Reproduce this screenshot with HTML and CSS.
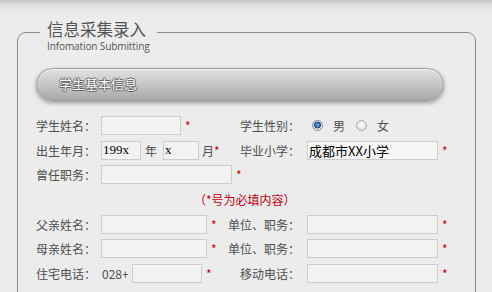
FILE: index.html
```html
<!DOCTYPE html>
<html>
  <head>
    <meta charset="utf-8" />
    <title>信息采集录入</title>
    <link rel="stylesheet" href="styles.css">
  </head>

  <body>
    <div class="page">
      <div class="box">
        <div class="legend">
          <div class="legend-cn">信息采集录入</div>
          <div class="legend-en">Infomation Submitting</div>
        </div>

        <div class="bar">学生基本信息</div>

        <form class="form">
          <div class="row">
            <div class="left">
              <label class="lbl">学生姓名：</label>
              <input type="text" class="in w80" />
              <span class="star">*</span>
            </div>
            <label class="rlbl">学生性别：</label>
            <span class="radio on"></span><span class="opt">男</span>
            <span class="radio"></span><span class="opt">女</span>
          </div>

          <div class="row">
            <div class="left">
              <label class="lbl">出生年月：</label>
              <input type="text" class="in w40 serif" value="199x" />
              <span class="unit">年</span>
              <input type="text" class="in w36 serif" value="x" />
              <span class="unit2">月</span><span class="star s0">*</span>
            </div>
            <label class="rlbl">毕业小学：</label>
            <input type="text" class="in w131 dark" value="成都市XX小学" />
            <span class="star">*</span>
          </div>

          <div class="row">
            <div class="left">
              <label class="lbl">曾任职务：</label>
              <input type="text" class="in w131" />
              <span class="star">*</span>
            </div>
          </div>

          <div class="row note">（*号为必填内容）</div>

          <div class="row">
            <div class="left">
              <label class="lbl">父亲姓名：</label>
              <input type="text" class="in w106" />
              <span class="star">*</span>
            </div>
            <label class="rlbl">单位、职务：</label>
            <input type="text" class="in w131" />
            <span class="star">*</span>
          </div>

          <div class="row">
            <div class="left">
              <label class="lbl">母亲姓名：</label>
              <input type="text" class="in w106" />
              <span class="star">*</span>
            </div>
            <label class="rlbl">单位、职务：</label>
            <input type="text" class="in w131" />
            <span class="star">*</span>
          </div>

          <div class="row">
            <div class="left">
              <label class="lbl">住宅电话：</label>
              <span class="pre">028+</span>
              <input type="text" class="in w70" />
              <span class="star">*</span>
            </div>
            <label class="rlbl">移动电话：</label>
            <input type="text" class="in w131" />
            <span class="star">*</span>
          </div>
        </form>
      </div>
    </div>
  </body>
</html>
```

FILE: styles.css
```css
* {
  box-sizing: border-box;
}

html,
body {
  margin: 0;
  padding: 0;
}

body {
  font-family: "Noto Sans CJK SC", "Noto Sans", sans-serif;
  font-size: 12px;
  color: #4e4e4e;
  background: #ececec;
  height: 292px;
  overflow: hidden;
}

.page {
  height: 292px;
  overflow: hidden;
  padding: 32px 16px 0 17px;
  background: linear-gradient(to bottom, #c4c4c4 0, #dedede 5px, #eaeaea 11px, #ececec 16px);
}

.box {
  position: relative;
  height: 300px;
  border: 1px solid #8a8a8a;
  border-radius: 9px;
  padding: 35px 0 0 18px;
}

.legend {
  position: absolute;
  top: -12px;
  left: 22px;
  padding: 0 7px 0 7px;
  background: #ececec;
}

.legend-cn {
  font-size: 16.5px;
  line-height: 16px;
  height: 17px;
  overflow: visible;
  color: #555;
}

.legend-en {
  margin-top: 3px;
  font-family: "Open Sans", "Noto Sans", sans-serif;
  font-size: 10px;
  line-height: 11px;
  color: #555;
  letter-spacing: -0.1px;
}

.bar {
  width: 408px;
  height: 33px;
  border: 1px solid #9a9a9a;
  border-radius: 17px;
  background: linear-gradient(to bottom, #e2e2e2 0%, #c6c6c6 50%, #a9a9a9 100%);
  box-shadow: 0 2px 4px rgba(0, 0, 0, 0.35), inset 0 1px 0 rgba(255, 255, 255, 0.6);
  padding-left: 22px;
  line-height: 30px;
  font-size: 13px;
  color: #fff;
  text-shadow: -1px 0 #666, 1px 0 #666, 0 -1px #666, 0 1px #666;
}

.form {
  margin-top: 12px;
}

.row {
  display: flex;
  align-items: center;
  height: 24.7px;
  white-space: nowrap;
}

.left {
  display: flex;
  align-items: center;
  width: 193px;
  flex: none;
}

.lbl {
  width: 65px;
  flex: none;
}

.rlbl {
  width: 78px;
  flex: none;
  display: flex;
  justify-content: flex-end;
  padding-right: 7px;
}

.in {
  height: 19px;
  border: 1px solid #cdcdcd;
  background: #f2f2f2;
  padding: 0 1px;
  font-family: "Noto Sans CJK SC", sans-serif;
  font-size: 13px;
  color: #000;
  outline: none;
  flex: none;
}

.serif {
  font-family: "Liberation Serif", "Noto Serif CJK SC", serif;
  font-size: 13px;
}

.dark {
  background: #f6f6f6;
}

.w80 {
  width: 80px;
}

.w40 {
  width: 40px;
}

.w36 {
  width: 36px;
}

.w131 {
  width: 131px;
}

.w106 {
  width: 106px;
}

.w70 {
  width: 70px;
}

.star {
  color: #c8000a;
  font-size: 12px;
  margin-left: 4px;
  flex: none;
}

.s0 {
  margin-left: 0;
}

.unit {
  margin: 0 6px 0 4px;
}

.unit2 {
  margin-left: 3px;
}

.pre {
  width: 31px;
  flex: none;
  padding-left: 1px;
}

.radio {
  width: 11px;
  height: 11px;
  border-radius: 50%;
  border: 1px solid #a8a8a8;
  background: radial-gradient(circle at 50% 40%, #fff 0, #e6e6e6 60%, #cfcfcf 100%);
  margin: 0 10px 0 5px;
  flex: none;
}

.radio.on {
  background: radial-gradient(circle at 50% 45%, #6fb2de 0, #2a6fa8 35%, #1e4d78 48%, #e9e9e9 56%, #d2d2d2 100%);
  border-color: #8a8a8a;
}

.opt {
  margin-right: 6px;
}

.note {
  padding-left: 158px;
  color: #c8000a;
}
```
